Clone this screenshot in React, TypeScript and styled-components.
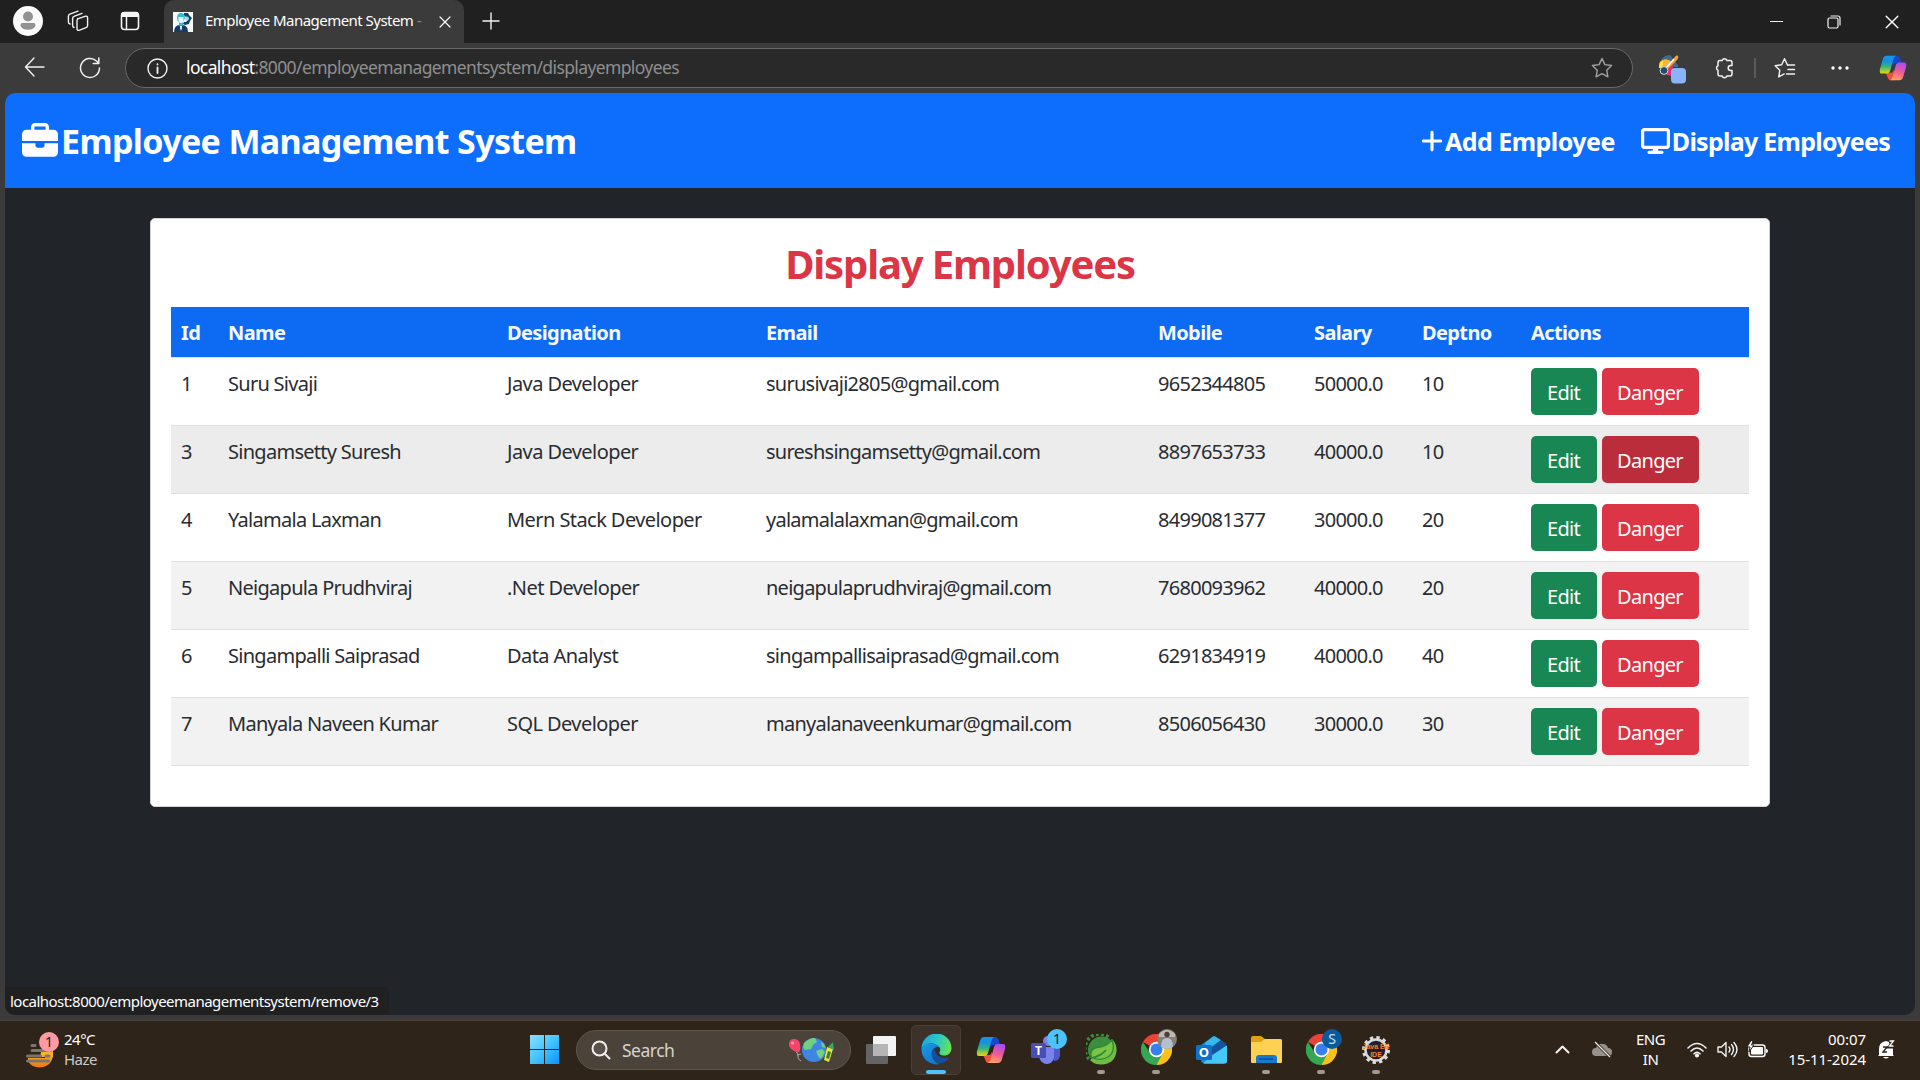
import React from "react";
import styled, { createGlobalStyle, css } from "styled-components";
import { FaBriefcase, FaDisplay, FaPlus } from "react-icons/fa6";

const Global = createGlobalStyle`
  * { box-sizing: border-box; }
  body { margin: 0; background: #3b3b3b; font-family: "Noto Sans", "Open Sans", sans-serif; overflow: hidden; }
`;

const Desktop = styled.div`
  width: 1920px;
  height: 1080px;
  display: flex;
  flex-direction: column;
  background: #3b3b3b;
`;

/* ---------- browser chrome ---------- */
const TabStrip = styled.div`
  height: 43px;
  flex: none;
  display: flex;
  align-items: center;
  background: #202020;
  color: #fff;
`;
const StripIcons = styled.div`
  width: 164px;
  height: 43px;
  padding: 0 0 2px 13px;
  display: flex;
  align-items: center;
  svg + svg { margin-left: 24px; }
  svg:last-child { margin-left: 31px; }
`;
const Tab = styled.div`
  width: 300px;
  height: 43px;
  padding: 0 13px 0 9px;
  display: flex;
  align-items: center;
  background: #3b3b3b;
  border-radius: 10px 10px 0 0;
`;
const TabTitle = styled.div`
  flex: 1;
  margin-left: 12px;
  padding-bottom: 4px;
  font-size: 15px;
  letter-spacing: -0.53px;
  white-space: nowrap;
  overflow: hidden;
`;
const Faded = styled.span`color: #8b8b8b;`;
const NewTab = styled.div`
  flex: 1;
  display: flex;
  padding-left: 18px;
  padding-bottom: 1px;
`;
const WindowButtons = styled.div`
  display: flex;
  align-items: center;
  gap: 44px;
  padding-right: 21px;
`;
const Toolbar = styled.div`
  height: 50px;
  flex: none;
  display: flex;
  align-items: center;
  padding: 0 0 0 24px;
`;
const NavIcons = styled.div`
  width: 101px;
  display: flex;
  gap: 34px;
`;
const AddressBar = styled.div`
  width: 1508px;
  height: 40px;
  display: flex;
  align-items: center;
  padding: 0 19px 0 21px;
  background: #292929;
  border: 1px solid #686868;
  border-radius: 20px;
`;
const Url = styled.div`
  flex: 1;
  margin-left: 18px;
  padding-bottom: 2px;
  font-size: 17.5px;
  letter-spacing: -0.62px;
  color: #8f8f8f;
  b { font-weight: 400; color: #fff; }
`;
const ToolIcons = styled.div`
  flex: 1;
  display: flex;
  align-items: center;
  padding-left: 25px;
  svg { flex: none; }
  svg:first-child { margin-top: 2px; }
`;
const Divider = styled.i`
  width: 2px;
  height: 20px;
  background: #5b5b5b;
`;
const Gap = styled.i<{ $w: number }>`
  flex: none;
  width: ${(p) => p.$w}px;
`;

/* ---------- page ---------- */
const Page = styled.main`
  position: relative;
  width: 1910px;
  height: 922px;
  flex: none;
  margin-left: 5px;
  background: #212529;
  border-radius: 10px;
  overflow: hidden;
`;
const Navbar = styled.nav`
  height: 95px;
  display: flex;
  align-items: center;
  justify-content: space-between;
  padding: 2px 25px 0 17px;
  background: #0d6efd;
  color: #fff;
  font-weight: 700;
`;
const Brand = styled.div`
  display: flex;
  align-items: center;
  gap: 3px;
  margin-top: -2px;
  font-size: 34px;
  letter-spacing: -0.65px;
  white-space: nowrap;
  svg { width: 36px; height: 36px; }
`;
const NavLinks = styled.div`
  display: flex;
  gap: 26px;
  margin-top: -1px;
`;
const NavLink = styled.a<{ $icon: number; $track: number }>`
  display: flex;
  align-items: center;
  gap: 2px;
  font-size: 25px;
  letter-spacing: ${(p) => p.$track}px;
  white-space: nowrap;
  svg { width: ${(p) => p.$icon}px; height: 26px; }
`;
const Card = styled.section`
  width: 1620px;
  height: 589px;
  margin: 30px auto 0;
  padding: 20px;
  background: #fff;
  border: 1px solid #d3d3d4;
  border-radius: 5px;
`;
const Title = styled.h1`
  margin: 0;
  height: 68px;
  padding-top: 1px;
  line-height: 48px;
  font-size: 40px;
  font-weight: 700;
  letter-spacing: -1.15px;
  text-align: center;
  color: #dc3545;
`;
const columns = "47px 279px 259px 392px 156px 108px 109px 228px";
const HeadRow = styled.div`
  display: grid;
  grid-template-columns: ${columns};
  height: 51px;
  background: #0d6af2;
  border-bottom: 1px solid #dee2e6;
  color: #f5f8ff;
  font-size: 20px;
  line-height: 51px;
  font-weight: 700;
`;
const HeadCell = styled.div`
  padding: 0 10px;
  white-space: nowrap;
  letter-spacing: -0.62px;
`;
const Row = styled.div<{ $tone: string }>`
  display: grid;
  grid-template-columns: ${columns};
  height: 68px;
  background: ${(p) => p.$tone};
  border-bottom: 1px solid #dee2e6;
  color: #292c30;
  font-size: 20px;
  line-height: 30px;
`;
const Cell = styled.div<{ $track: number }>`
  padding: 11px 10px 0;
  white-space: nowrap;
  letter-spacing: ${(p) => p.$track}px;
`;
const Actions = styled.div`
  display: flex;
  gap: 5px;
  padding: 10px;
`;
const Button = styled.button<{ $bg: string; $w: number }>`
  width: ${(p) => p.$w}px;
  height: 47px;
  padding: 2px 1px 0 0;
  border: 0;
  border-radius: 5px;
  background: ${(p) => p.$bg};
  color: #fff;
  font: 400 20px "Noto Sans", sans-serif;
  letter-spacing: -0.7px;
`;
const StatusBubble = styled.div`
  position: absolute;
  left: 0;
  bottom: 0;
  width: 384px;
  height: 28px;
  padding-left: 5px;
  background: #202020;
  border-radius: 0 5px 0 0;
  color: #fff;
  font-size: 15px;
  line-height: 28px;
  letter-spacing: -0.53px;
  white-space: nowrap;
`;

/* ---------- taskbar ---------- */
const Taskbar = styled.footer`
  height: 60px;
  margin-top: 5px;
  padding-bottom: 2px;
  display: flex;
  align-items: center;
  background: #2e2419;
  border-top: 1px solid #4b4339;
  color: #fff;
`;
const Weather = styled.div`
  width: 530px;
  display: flex;
  align-items: center;
  padding-left: 25px;
  gap: 5px;
`;
const Stack = styled.div<{ $align?: string; $track?: number }>`
  margin-top: -2px;
  font-size: 15px;
  line-height: 20px;
  letter-spacing: ${(p) => p.$track ?? -0.5}px;
  text-align: ${(p) => p.$align || "left"};
  white-space: nowrap;
  span { color: #cfcbc7; }
`;
const SearchBox = styled.div`
  width: 275px;
  height: 40px;
  margin-left: 17px;
  padding: 0 14px 0 14px;
  display: flex;
  align-items: center;
  background: #4b4339;
  border: 1px solid #5f574e;
  border-radius: 20px;
`;
const SearchText = styled.span`
  flex: 1;
  margin-left: 11px;
  font-size: 17.5px;
  letter-spacing: -0.5px;
  color: #d6d3d0;
`;
const Apps = styled.div`
  display: flex;
  margin-left: 5px;
  gap: 5px;
`;
const AppSlot = styled.div<{ $active?: boolean; $running?: boolean }>`
  position: relative;
  width: 50px;
  height: 50px;
  display: flex;
  align-items: center;
  justify-content: center;
  border-radius: 5px;
  border: 1px solid ${(p) => (p.$active ? "#493f36" : "transparent")};
  background: ${(p) => (p.$active ? "#3c3229" : "transparent")};
  ${(p) =>
    (p.$active || p.$running) &&
    css`
      &::after {
        content: "";
        position: absolute;
        bottom: 0;
        width: ${p.$active ? 20 : 8}px;
        height: 4px;
        border-radius: 2px;
        background: ${p.$active ? "#4cc2ff" : "#a09a93"};
      }
    `}
`;
const Badge = styled.span<{ $bg: string; $fg: string }>`
  position: absolute;
  right: 3px;
  top: 3px;
  width: 20px;
  height: 20px;
  border-radius: 50%;
  background: ${(p) => p.$bg};
  color: ${(p) => p.$fg};
  font-size: 14px;
  line-height: 20px;
  text-align: center;
`;
const PhotoBadge = styled.span`
  position: absolute;
  right: 3px;
  top: 3px;
  display: flex;
`;
const Tray = styled.div`
  flex: 1;
  display: flex;
  align-items: center;
  justify-content: flex-end;
  padding-right: 25px;
`;

/* ---------- drawings ---------- */
const line = { fill: "none", stroke: "#f2f2f2", strokeWidth: 1.4, strokeLinecap: "round", strokeLinejoin: "round" } as const;

const Profile = () => (
  <svg width="30" height="30" viewBox="0 0 30 30">
    <circle cx="15" cy="15" r="15" fill="#fafafa" />
    <circle cx="15" cy="10.500" r="5" fill="#929292" />
    <path d="M9.500 17h11a2 2 0 0 1 2 2c0 3-3.500 4.700-7.500 4.700S7.500 22 7.500 19a2 2 0 0 1 2-2Z" fill="#929292" />
  </svg>
);
const Workspaces = () => (
  <svg width="22" height="22" viewBox="0 0 22 22" {...line}>
    <path d="M10.500 8.800 18 6.300q2.600-.7 2.600 1.700v7.500q0 1.600-1.500 2.100l-6.500 2.500q-2.600.9-2.600-1.600V10.500q0-1.200 1-1.700Z" />
    <path d="M7 17.500q-1.400-.5-1.400-2V8.600q0-1.600 1.400-2.200l8-3M3 14q-1.600-.5-1.600-2V6.300q0-1.600 1.500-2.200L11 1.200" />
  </svg>
);
const VerticalTabs = () => (
  <svg width="20" height="20" viewBox="0 0 20 20">
    <rect x="1.500" y="1.500" width="17" height="17" rx="3" fill="none" stroke="#f5f5f5" strokeWidth="1.600" />
    <path d="M1 6V4q0-3 3-3h12q3 0 3 3v2Z" fill="#f5f5f5" />
    <path d="M6.500 6v12" stroke="#f5f5f5" strokeWidth="1.500" />
  </svg>
);
const Favicon = () => (
  <svg width="20" height="20" viewBox="0 0 20 20">
    <path d="M0 0h20v20H0z" fill="#f7fbfd" />
    <path d="M11 1h4l1 2 3 3-2 3-1 3-4 1-2-1 1-2h2l2-2-1-3-3-1Z" fill="#183f69" />
    <circle cx="14" cy="6.500" r="2" fill="#8fe3ee" />
    <path d="M4 6q0-5 4-5t4 5l-2 4v4H6v-4Q4 9 4 6Z" fill="#35bcd0" />
    <path d="M5.500 5h5v3.500q-.5 2.500-2.500 2.500T5.500 8.500Z" fill="#e8fbff" />
    <path d="M1 20q0-6 5-7l2 3 2-3q5 1 5 7Z" fill="#153b67" />
    <path d="m8 14 1 2-1 3-1-3Z" fill="#fff" />
  </svg>
);
const Cross = ({ s = 12 }: { s?: number }) => (
  <svg width={s} height={s} viewBox="0 0 12 12" {...line} stroke="#fff" strokeWidth="1.200"><path d="m1 1 10 10M11 1 1 11" /></svg>
);
const Copilot = ({ s = 30 }: { s?: number }) => (
  <svg width={s} height={s} viewBox="0 0 30 30">
    <defs>
      <linearGradient id="cpL" x1="0" y1="0" x2="0" y2="1"><stop offset="0" stopColor="#1497f0" /><stop offset=".3" stopColor="#168fe0" /><stop offset=".6" stopColor="#35b47c" /><stop offset="1" stopColor="#ecd60f" /></linearGradient>
      <linearGradient id="cpR" x1=".6" y1="0" x2=".3" y2="1"><stop offset="0" stopColor="#a84cf5" /><stop offset=".5" stopColor="#f05a96" /><stop offset="1" stopColor="#ffa45c" /></linearGradient>
    </defs>
    <path d="M13 2h6q3 0 4 4l1 4h-6q-3 0-4 3Z" fill="#1748c8" />
    <path d="M7 20h7l2-3v11h-4q-2 0-3-4Z" fill="#f0503c" />
    <path d="M8 2h10q-2 1-3 5l-3 11q-1 3-4 3H3q-3 0-2-5L4 6q1-4 4-4Z" fill="url(#cpL)" />
    <path d="M22 28H12q2-1 3-5l3-11q1-3 4-3h5q3 0 2 5l-3 10q-1 4-4 4Z" fill="url(#cpR)" />
  </svg>
);
const Painter = () => (
  <svg width="29" height="30" viewBox="0 0 29 30">
    <path d="M3 6Q6 1 12 1l8 10v2h-8Z" fill="#416c84" />
    <path d="M1 12q0-5 4-6l5 2-5 6H1Z" fill="#ffe03a" />
    <path d="M5 6q4-2 9 2l-5 6-4-2Z" fill="#f9b43a" />
    <path d="m8 18 6-9 1 4-2 9-4-1Z" fill="#e9297c" />
    <path d="m9 13 7-9q3-4 4-2t-2 5l-8 8Z" fill="#f7a430" />
    <path d="m8 14 8-9" stroke="#fff" strokeWidth="1.600" />
    <circle cx="6" cy="16.500" r="3.900" fill="#284b60" stroke="#c9e0e8" />
    <rect x="13" y="14" width="15" height="15.500" rx="4" fill="#8ab4f8" />
  </svg>
);
const Puzzle = () => (
  <svg width="20" height="22" viewBox="0 0 20 22" {...line} strokeWidth="1.500">
    <path d="M6 3.500h2.200a2.400 2.400 0 0 1 4.600 0H16q2 0 2 2v3h-1.300a2.500 2.500 0 0 0 0 5H18v3.500q0 2-2 2h-3.200a2.400 2.400 0 0 1-4.600 0H6q-2 0-2-2v-3.700a2.500 2.500 0 0 1 0-4.600V5.500q0-2 2-2Z" />
  </svg>
);
const Star = ({ list }: { list?: boolean }) => (
  <svg width="22" height="22" viewBox="0 0 22 22" {...line} stroke={list ? "#f2f2f2" : "#a2a2a2"}>
    {list ? (
      <><path d="m13.500 8-3-6.300-2.800 6-6.500 1 4.600 4.600-1.100 6.600 5.500-3" /><path d="M13.500 8h7M14 12.500h6.500M12.500 17h8" /></>
    ) : (
      <path d="m11 1.500 2.900 6.100 6.700.9-4.900 4.700 1.200 6.600-5.900-3.200-5.900 3.200 1.200-6.600L1.400 8.500l6.700-.9Z" />
    )}
  </svg>
);
const Windows = () => (
  <svg width="29" height="29" viewBox="0 0 29 29">
    <defs><linearGradient id="wn" gradientUnits="userSpaceOnUse" x1="0" y1="0" x2="29" y2="29"><stop offset="0" stopColor="#8adfff" /><stop offset=".5" stopColor="#43c4fd" /><stop offset="1" stopColor="#0a93ff" /></linearGradient></defs>
    <path fill="url(#wn)" d="M0 0H14V14H0ZM15 0H29V14H15ZM0 15H14V29H0ZM15 15H29V29H15Z" />
  </svg>
);
const HazeIcon = () => (
  <svg width="34" height="36" viewBox="0 0 34 36">
    <defs><linearGradient id="hz" x1="0" y1="0" x2="0" y2="1"><stop offset="0" stopColor="#fbbb2c" /><stop offset="1" stopColor="#f2780f" /></linearGradient></defs>
    <path d="M3 26H20q-1-6 8-7 1 15-13 16.500Q6 35 3 29Z" fill="url(#hz)" />
    <path d="M16 20h12v5H15Z" fill="#fbb22a" />
    <path d="M7 13.500h3M7 18.500h17M2.500 24h13M21 24h3M2.500 29h21" stroke="#7b7570" strokeWidth="3" strokeLinecap="round" />
    <circle cx="24" cy="10" r="10" fill="#ff99a4" />
    <text x="24" y="15" fontSize="14" textAnchor="middle" fill="#2b1a1a">1</text>
  </svg>
);
const Magnifier = () => (
  <svg width="20" height="20" viewBox="0 0 20 20" fill="none" stroke="#eee" strokeWidth="2"><circle cx="8.500" cy="8.500" r="7" fill="#5a5249" /><path d="m13.500 13.500 5 5" strokeLinecap="round" /></svg>
);
const SearchArt = () => (
  <svg width="48" height="26" viewBox="0 0 48 26">
    <path d="M8 15q3 1 2 4t3 5M9 18l4-1" fill="none" stroke="#aaa" />
    <path d="M10 15.500Q1 13 1 7.500t5-5.500 6 5-1 8Z" fill="#f8446d" /><circle cx="4.500" cy="6" r="1.500" fill="#ff9cb0" />
    <circle cx="26" cy="13" r="12" fill="#3f86e4" />
    <path d="M16 6q5-5 11-5l2 4-4 3-2 4-6 1-2-3ZM28 14l6-2 3 3-4 7-3-3Zm5-9 3 2 2 4-4-1Z" fill="#6fd080" />
    <path d="m39 10 6 2-4 13-5-2Z" fill="#dfe83d" /><path d="m40 10 5-5 1 8Z" fill="#36a866" /><path d="m40 14 3 1-2 7-3-1Z" fill="#437c36" />
  </svg>
);
const TaskView = () => (
  <svg width="30" height="28" viewBox="0 0 30 28">
    <rect y="8" width="22" height="20" rx="1" fill="#646464" /><rect x="7" width="23" height="20" rx="1" fill="#f3f3f3" /><path d="M7 8h15v12H7z" fill="#b5b5b5" />
  </svg>
);
const Edge = () => (
  <svg width="31" height="31" viewBox="0 0 31 31">
    <defs>
      <linearGradient id="eg" x1="0" y1=".3" x2="1" y2=".5"><stop offset="0" stopColor="#1ba5df" /><stop offset=".55" stopColor="#2ec8c4" /><stop offset="1" stopColor="#6be34f" /></linearGradient>
      <linearGradient id="eb" x1="0" y1="0" x2="1" y2="1"><stop offset="0" stopColor="#1d9ce5" /><stop offset="1" stopColor="#0d6ecb" /></linearGradient>
    </defs>
    <path d="M.500 15A15 15 0 0 1 30.500 14c0 5-3.500 7.500-7.500 7.500-4 0-5.200-1.700-4.600-3 .6-1.200 1.200-2 .6-4C18 11.500 14 9.500 10 9.500 5 9.500 2 12 .500 15Z" fill="url(#eg)" />
    <path d="M.500 15C2 11.500 5 9.500 9.500 9.500c4 0 7.500 1.500 9 4-4-1-7.500 2-7.500 6.500 0 5 3 8.500 8 10A15 15 0 0 1 .500 15Z" fill="url(#eb)" />
    <path d="M13.500 13.500c-3.500 3-4 8-1 11.500 3.500 6 11 6 16-2-4 2-8 1.500-11-1-2.500-2.500-4.500-5.500-4-8.500Z" fill="#144f9e" />
    <path d="M14 14q3-2.500 5 0 .5 2-1 4.500.5 3 4 3-3 1.500-6-1-2-3-2-6.500Z" fill="#33302c" />
  </svg>
);
const Teams = () => (
  <svg width="32" height="30" viewBox="0 0 32 30">
    <circle cx="25" cy="8" r="4" fill="#5059c9" /><circle cx="18" cy="6" r="5" fill="#7b83eb" />
    <path d="M20 12h10v9q-1 5-6 5Z" fill="#5059c9" /><path d="M9 12h15v10q-1 7-7 7t-8-7Z" fill="#7b83eb" />
    <rect x="1" y="8" width="15" height="15" rx="1.500" fill="#464eb8" />
    <text x="8.500" y="20" fontSize="12" fontWeight="700" textAnchor="middle" fill="#fff">T</text>
  </svg>
);
const Spring = () => (
  <svg width="31" height="31" viewBox="0 0 31 31">
    <circle cx="15.500" cy="16" r="13.500" fill="#3a8f3d" />
    <path d="M3 25A14 14 0 0 1 24 4.500" fill="none" stroke="#3a8f3d" strokeWidth="3.500" strokeDasharray="2.800 2.300" />
    <path d="M26 5q5 5 4.500 12Q29 30 15.500 30.500 8 30.500 4 26l8-8Z" fill="#6fbe44" />
    <path d="M5.500 24Q3 15 11 13.500q9-.5 15-7.500 4 12-4 17-7 4-15 1 9-2 13-8-6 6-14.500 8Z" fill="#79c646" stroke="#338537" strokeWidth="1.300" />
  </svg>
);
const Chrome = () => (
  <svg width="31" height="31" viewBox="0 0 31 31">
    <path d="M15.500 15.500 2 8A15.300 15.300 0 0 1 29 8Z" fill="#ea4335" />
    <path d="M15.500 15.500V8H29a15.300 15.300 0 0 1-13.500 23Z" fill="#fbc116" />
    <path d="m22 19-6.500 12A15.300 15.300 0 0 1 2 8l7 11 6.500 3.500Z" fill="#34a853" />
    <circle cx="15.500" cy="15.500" r="7.700" fill="#fff" /><circle cx="15.500" cy="15.500" r="6" fill="#397ff0" />
  </svg>
);
const Outlook = () => (
  <svg width="31" height="28" viewBox="0 0 31 28">
    <path d="m5 9 12-8.500q1-.7 2 0L30 8v17q0 2-2 2H8q-3 0-3-3Z" fill="#1490df" />
    <path d="m9 7 8-6.500q1-.7 2 0L25 4 12 13Z" fill="#35b8ee" />
    <path d="m25 4 5 4v2L16 19v-8Z" fill="#15539d" />
    <path d="m31 9.500v15q0 3-3 3H7l8-7Z" fill="#4fd0f7" />
    <path d="M31 9.500v15q0 3-3 3H8l8-8Z" fill="#45c8f4" />
    <rect y="9" width="16" height="15" rx="1.500" fill="#0f70cc" /><text x="8" y="21" fontSize="13" fontWeight="700" textAnchor="middle" fill="#fff">O</text>
  </svg>
);
const Folder = () => (
  <svg width="31" height="28" viewBox="0 0 31 28">
    <path d="M0 2q0-2 2-2h8l4 3h15q2 0 2 2v8H0Z" fill="#e0a212" /><path d="M0 6h10l4-3h15q2 0 2 2v21q0 1-1 1H1q-1 0-1-1Z" fill="#ffd152" />
    <path d="M5 27v-5q0-3 3-3h15q3 0 3 3v5Z" fill="#1479cf" /><path d="M8 23h14" stroke="#0d4f91" strokeWidth="1.500" />
  </svg>
);
const Eclipse = () => (
  <svg width="30" height="30" viewBox="0 0 30 30">
    <circle cx="15" cy="15" r="10.500" fill="#251d36" stroke="#d9d9d9" strokeWidth="2.500" /><circle cx="15" cy="15" r="12.500" fill="none" stroke="#ddd" strokeWidth="3" strokeDasharray="3.300 3.245" />
    <g fontFamily="Liberation Sans" fontSize="7" fontWeight="700" fill="#f5861f" textAnchor="middle"><text x="15" y="13.500">Java EE</text><text x="15" y="22">IDE</text></g>
  </svg>
);
const Photo = () => (
  <svg width="20" height="20" viewBox="0 0 20 20"><circle cx="10" cy="10" r="10" fill="#85827a" /><path d="M2 5q8-8 16 0v3H2Z" fill="#b9bab2" /><path d="M4 18q0-9 6-9t6 9q-6 4-12 0Z" fill="#b3c0ce" /><circle cx="10" cy="5.500" r="2.700" fill="#513d33" /></svg>
);
const Cloud = () => (
  <svg width="21" height="18" viewBox="0 0 21 18"><path d="M4 15a4 4 0 0 1 0-8q2-5 7-4 4 0 5 4 4 0 4 4t-3 4Z" fill="#97918b" /><path d="m3 1 15 15" stroke="#2e2419" strokeWidth="3" /><path d="m3 1 15 15" stroke="#eee" strokeWidth="1.300" /></svg>
);
const Wifi = () => (
  <svg width="20" height="16" viewBox="0 0 20 16" {...line} strokeWidth="1.600"><path d="M1 6q9-9 18 0M4 9q6-6 12 0M7 11.800q3-3 6 0" /><circle cx="10" cy="13.500" r="1.300" fill="#fff" /></svg>
);
const Speaker = () => (
  <svg width="21" height="17" viewBox="0 0 21 17" {...line}><path d="M1 6h3.500L9 1.500v14L4.500 11H1ZM12 6q2 2.500 0 5M14.500 3.500q4 5 0 10M17 1.500q6 7 0 14" /></svg>
);
const Battery = () => (
  <svg width="21" height="17" viewBox="0 0 21 17"><rect x="2" y="4" width="16" height="11.500" rx="2.500" fill="none" stroke="#fff" strokeWidth="1.400" /><rect x="4" y="6" width="12" height="7.500" rx="1" fill="#fff" /><path d="M19 8q2 0 2 2t-2 2Z" fill="#fff" /><path d="M4-.500 0 6h3l-1 5 5-7H4.500L6 0Z" fill="#fff" stroke="#2e2419" /></svg>
);
const Bell = () => (
  <svg width="18" height="20" viewBox="0 0 18 20"><path d="M2 15V9q0-7 7-8 7 1 7 8v6l1 1H1ZM6 17h6q-3 3-6 0Z" fill="#fff" /><path d="M12 2h4l-4 5h4" fill="none" stroke="#2e2419" strokeWidth="3" /><path d="M12.500 1h4l-4 5h4" fill="none" stroke="#fff" strokeWidth="1.300" /><path d="M6 7h4l-4 5h4" fill="none" stroke="#2e2419" strokeWidth="1.400" /></svg>
);

const employees = [
  ["1", "Suru Sivaji", "Java Developer", "surusivaji2805@gmail.com", "9652344805", "50000.0", "10"],
  ["3", "Singamsetty Suresh", "Java Developer", "sureshsingamsetty@gmail.com", "8897653733", "40000.0", "10"],
  ["4", "Yalamala Laxman", "Mern Stack Developer", "yalamalalaxman@gmail.com", "8499081377", "30000.0", "20"],
  ["5", "Neigapula Prudhviraj", ".Net Developer", "neigapulaprudhviraj@gmail.com", "7680093962", "40000.0", "20"],
  ["6", "Singampalli Saiprasad", "Data Analyst", "singampallisaiprasad@gmail.com", "6291834919", "40000.0", "40"],
  ["7", "Manyala Naveen Kumar", "SQL Developer", "manyalanaveenkumar@gmail.com", "8506056430", "30000.0", "30"],
];
const headings = ["Id", "Name", "Designation", "Email", "Mobile", "Salary", "Deptno", "Actions"];
const tracking = [-0.72, -0.72, -0.57, -0.74, -0.72, -0.75, -0.75];
const hovered = "3";

export default function App() {
  return (
    <Desktop>
      <Global />
      <TabStrip>
        <StripIcons><Profile /><Workspaces /><VerticalTabs /></StripIcons>
        <Tab><Favicon /><TabTitle>Employee Management System <Faded>-</Faded></TabTitle><Cross /></Tab>
        <NewTab><svg width="18" height="18" viewBox="0 0 18 18" {...line}><path d="M9 1v16M1 9h16" /></svg></NewTab>
        <WindowButtons>
          <svg width="13" height="13" viewBox="0 0 13 13" {...line} strokeWidth="1"><path d="M0 6.500h13" /></svg>
          <svg width="14" height="14" viewBox="0 0 14 14" {...line} strokeWidth="1.200"><rect x="1" y="3" width="10" height="10" rx="1.500" /><path d="M4 1h7q2 0 2 2v7" /></svg>
          <Cross s={14} />
        </WindowButtons>
      </TabStrip>
      <Toolbar>
        <NavIcons>
          <svg width="21" height="20" viewBox="0 0 21 20" {...line}><path d="M20 10H1.500M10 1 1.500 10l8.500 9" /></svg>
          <svg width="22" height="22" viewBox="0 0 22 22" {...line} strokeWidth="1.500"><path d="M20.500 11A9.500 9.500 0 1 1 17.500 4l2 2M19.800 1v5.500h-5.500" /></svg>
        </NavIcons>
        <AddressBar>
          <svg width="21" height="21" viewBox="0 0 21 21" {...line}><circle cx="10.500" cy="10.500" r="9.500" /><path d="M10.500 9.500v5.500M10.500 6.200v.2" strokeWidth="1.800" /></svg>
          <Url><b>localhost</b>:8000/employeemanagementsystem/displayemployees</Url>
          <Star />
        </AddressBar>
        <ToolIcons>
          <Painter /><Gap $w={27} /><Puzzle /><Gap $w={20} /><Divider /><Gap $w={18} /><Star list /><Gap $w={35} />
          <svg width="18" height="4" viewBox="0 0 18 4" fill="#fff"><circle cx="2" cy="2" r="1.700" /><circle cx="9" cy="2" r="1.700" /><circle cx="16" cy="2" r="1.700" /></svg>
          <Gap $w={30} /><Copilot s={28} />
        </ToolIcons>
      </Toolbar>

      <Page>
        <Navbar>
          <Brand><FaBriefcase />Employee Management System</Brand>
          <NavLinks>
            <NavLink $icon={22} $track={-0.54}><FaPlus />Add Employee</NavLink>
            <NavLink $icon={29} $track={-0.74}><FaDisplay />Display Employees</NavLink>
          </NavLinks>
        </Navbar>
        <Card>
          <Title>Display Employees</Title>
          <HeadRow>{headings.map((h) => <HeadCell key={h}>{h}</HeadCell>)}</HeadRow>
          {employees.map((e, i) => (
            <Row key={e[0]} $tone={e[0] === hovered ? "#ececec" : i % 2 ? "#f2f2f2" : "#fff"}>
              {e.map((v, c) => <Cell key={c} $track={tracking[c]}>{v}</Cell>)}
              <Actions>
                <Button $bg="#198754" $w={66}>Edit</Button>
                <Button $bg={e[0] === hovered ? "#bb2d3b" : "#dc3545"} $w={97}>Danger</Button>
              </Actions>
            </Row>
          ))}
        </Card>
        <StatusBubble>localhost:8000/employeemanagementsystem/remove/3</StatusBubble>
      </Page>

      <Taskbar>
        <Weather><HazeIcon /><Stack>24°C<br /><span>Haze</span></Stack></Weather>
        <Windows />
        <SearchBox><Magnifier /><SearchText>Search</SearchText><SearchArt /></SearchBox>
        <Apps>
          <AppSlot><TaskView /></AppSlot>
          <AppSlot $active><Edge /></AppSlot>
          <AppSlot><Copilot /></AppSlot>
          <AppSlot><Teams /><Badge $bg="#4cc2ff" $fg="#10202b">1</Badge></AppSlot>
          <AppSlot $running><Spring /></AppSlot>
          <AppSlot $running><Chrome /><PhotoBadge><Photo /></PhotoBadge></AppSlot>
          <AppSlot><Outlook /></AppSlot>
          <AppSlot $running><Folder /></AppSlot>
          <AppSlot $running><Chrome /><Badge $bg="#0b5a9d" $fg="#cfe3f5">S</Badge></AppSlot>
          <AppSlot $running><Eclipse /></AppSlot>
        </Apps>
        <Tray>
          <svg width="15" height="9" viewBox="0 0 15 9" {...line} strokeWidth="2"><path d="m1.500 7.500 6-6 6 6" /></svg>
          <Gap $w={22} /><Cloud /><Gap $w={23} />
          <Stack $align="center">ENG<br />IN</Stack>
          <Gap $w={22} /><Wifi /><Gap $w={10} /><Speaker /><Gap $w={9} /><Battery /><Gap $w={20} />
          <Stack $align="right" $track={-0.05}>00:07<br />15-11-2024</Stack>
          <Gap $w={11} /><Bell />
        </Tray>
      </Taskbar>
    </Desktop>
  );
}
